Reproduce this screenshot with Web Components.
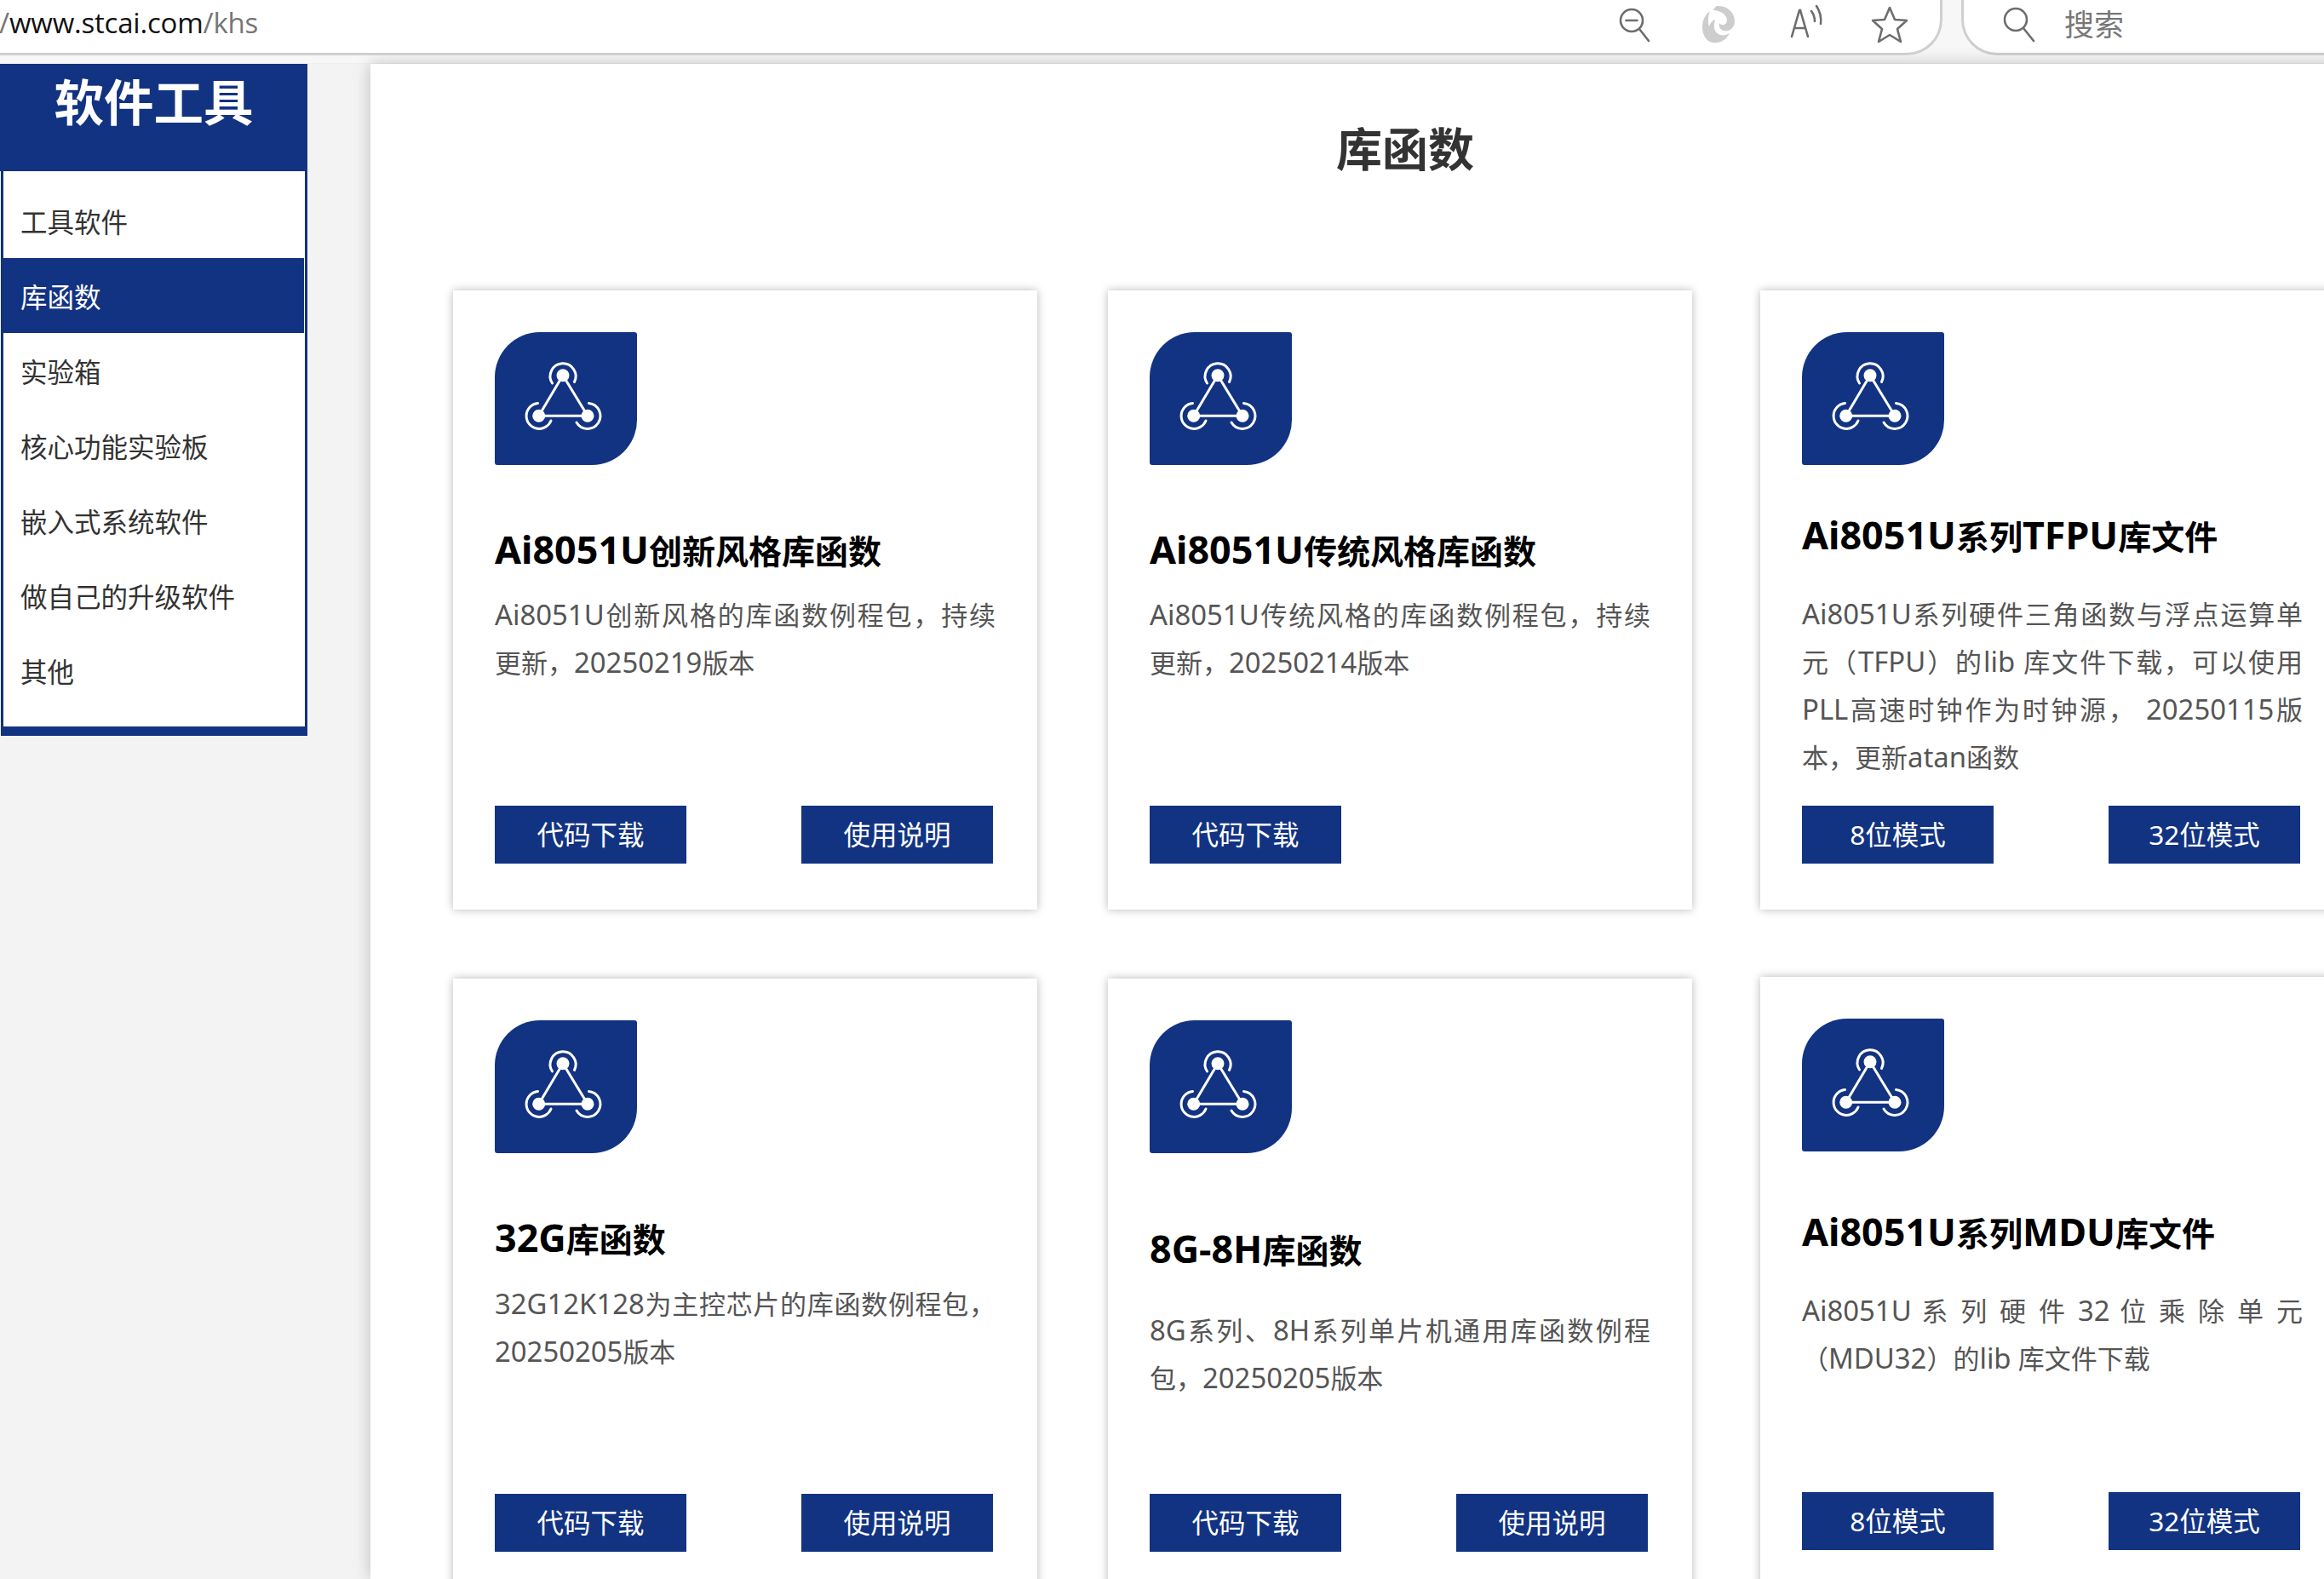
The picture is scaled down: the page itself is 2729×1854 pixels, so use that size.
<!DOCTYPE html>
<html lang="zh-CN">
<head>
<meta charset="utf-8">
<title>库函数</title>
<style>
html,body{margin:0;padding:0;width:2729px;height:1854px;overflow:hidden;background:#f3f3f4;font-family:"Noto Sans","Noto Sans CJK SC",sans-serif;}
x-shell{width:2729px;height:1854px;}
</style>
</head>
<body>
<x-shell>
  <x-browser-bar slot="bar"></x-browser-bar>
  <x-sidebar slot="side" heading="软件工具">
    <x-nav-item>工具软件</x-nav-item>
    <x-nav-item active>库函数</x-nav-item>
    <x-nav-item>实验箱</x-nav-item>
    <x-nav-item>核心功能实验板</x-nav-item>
    <x-nav-item>嵌入式系统软件</x-nav-item>
    <x-nav-item>做自己的升级软件</x-nav-item>
    <x-nav-item>其他</x-nav-item>
  </x-sidebar>
  <x-main-panel slot="main" heading="库函数">
    <x-card style="--tm:69px;--dm:17px">
      <span slot="title">Ai8051U创新风格库函数</span>
      <span slot="desc">Ai8051U创新风格的库函数例程包，持续更新，20250219版本</span>
      <x-btn slot="actions">代码下载</x-btn><x-btn slot="actions">使用说明</x-btn>
    </x-card>
    <x-card style="--tm:69px;--dm:17px">
      <span slot="title">Ai8051U传统风格库函数</span>
      <span slot="desc">Ai8051U传统风格的库函数例程包，持续更新，20250214版本</span>
      <x-btn slot="actions">代码下载</x-btn>
    </x-card>
    <x-card style="--tm:52px;--dm:33px;margin-left:-3px">
      <span slot="title">Ai8051U系列TFPU库文件</span>
      <span slot="desc">Ai8051U系列硬件三角函数与浮点运算单元（TFPU）的lib 库文件下载，可以使用PLL高速时钟作为时钟源， 20250115版本，更新atan函数</span>
      <x-btn slot="actions">8位模式</x-btn><x-btn slot="actions">32位模式</x-btn>
    </x-card>
    <x-card style="--tm:69px;--dm:18px">
      <span slot="title">32G库函数</span>
      <span slot="desc">32G12K128为主控芯片的库函数例程包，20250205版本</span>
      <x-btn slot="actions">代码下载</x-btn><x-btn slot="actions">使用说明</x-btn>
    </x-card>
    <x-card style="--tm:82px;--dm:36px">
      <span slot="title">8G-8H库函数</span>
      <span slot="desc">8G系列、8H系列单片机通用库函数例程包，20250205版本</span>
      <x-btn slot="actions">代码下载</x-btn><x-btn slot="actions">使用说明</x-btn>
    </x-card>
    <x-card style="--tm:64px;--dm:33px;margin-left:-3px;margin-top:-2px">
      <span slot="title">Ai8051U系列MDU库文件</span>
      <span slot="desc">Ai8051U 系 列 硬 件 32 位 乘 除 单 元（MDU32）的lib 库文件下载</span>
      <x-btn slot="actions">8位模式</x-btn><x-btn slot="actions">32位模式</x-btn>
    </x-card>
  </x-main-panel>
</x-shell>
<script>
const BLUE = '#123382';
function def(name, html, init){
  customElements.define(name, class extends HTMLElement{
    constructor(){ super(); const r=this.attachShadow({mode:'open'}); r.innerHTML=html; }
    connectedCallback(){ if(init) init(this); }
  });
}
/* Latin runs are set larger than the CJK around them, as in the reference */
def('x-lat', `<style>:host{display:inline;font-size:var(--lat,1.06em)}</style><slot></slot>`);
document.querySelectorAll('[slot=title],[slot=desc]').forEach(s=>{
  const t=s.textContent; s.textContent='';
  t.split(/([A-Za-z0-9\-]+)/).forEach((p,i)=>{
    if(!p) return;
    if(i%2){ const e=document.createElement('x-lat'); e.textContent=p; s.appendChild(e); }
    else s.appendChild(document.createTextNode(p));
  });
});
def('x-shell', `<style>
:host{display:block;position:relative;overflow:hidden}
.row{display:flex;align-items:stretch;height:1779px}
</style>
<slot name="bar"></slot>
<div class="row"><slot name="side"></slot><slot name="main"></slot></div>`);

def('x-browser-bar', `<style>
:host{display:block;height:75px;box-sizing:border-box;background:#f7f7f7;border-bottom:1px solid #efefef;font-family:"Open Sans","Noto Sans CJK SC",sans-serif}
.wrap{display:flex;height:65px}
.addr{width:2281px;height:65px;box-sizing:border-box;background:#fff;border-right:3px solid #cfcfcf;border-bottom:3px solid #cfcfcf;border-radius:0 0 42px 0;display:flex;align-items:center;position:relative;padding-bottom:9px}
.url{font-size:33px;color:#767676;white-space:nowrap;margin-left:-1px;letter-spacing:-.2px}
.url b{font-weight:400;color:#111}
.tools{margin-left:auto;display:flex;align-items:center;margin-right:29px;gap:0}
.tools svg{display:block;height:54px;width:60px;flex:none}
.t1{margin-right:38px}.t2{margin-right:42px}.t3{margin-right:40px}
.search{flex:1;margin-left:22px;height:65px;box-sizing:border-box;background:#fff;border-left:3px solid #cfcfcf;border-bottom:3px solid #cfcfcf;border-radius:0 0 0 42px;display:flex;align-items:center;padding-left:42px;padding-bottom:9px;color:#777;font-size:35px;font-family:"Noto Sans CJK SC",sans-serif}
.search svg{width:46px;height:46px;flex:none;margin-right:30px}
</style>
<div class="wrap">
  <div class="addr">
    <span class="url">/<b>www.stcai.com</b>/khs</span>
    <div class="tools">
      <svg class="t1" viewBox="0 0 60 54"><g fill="none" stroke="#6d6d6d" stroke-width="2.6" stroke-linecap="round"><circle cx="27" cy="24" r="13"/><path d="M20.5 24h13M36 34l11 14"/></g></svg>
      <svg class="t2" viewBox="0 0 60 54"><g fill="#cdcdcd"><path d="M30 7c13 0 20 9 20 18 0 8-7 13-13 11-4-1-6-5-5-9 2 3 6 3 8 0 3-5-1-14-15-15 1-3 3-5 5-5z"/><path d="M21 13c-6 4-9 11-9 19 0 9 5 17 12 18 9 1 16-3 20-11-7 4-14 3-17-3-2-5-1-9 0-13-3 1-6 4-7 8-2-6-1-13 1-18z"/></g></svg>
      <svg class="t3" viewBox="0 0 60 54"><g fill="none" stroke="#6d6d6d" stroke-width="2.6" stroke-linecap="round"><path d="M15 43l9-31h1l9 31M18 33h13"/><path d="M38 13c3 4 4 8 4 12M44 7c4 6 6 13 5 21"/></g></svg>
      <svg viewBox="0 0 60 54"><path fill="none" stroke="#6d6d6d" stroke-width="2.6" stroke-linejoin="round" d="M30 9l6 14 14 1-11 10 4 15-13-8-13 8 4-15-11-10 14-1z"/></svg>
    </div>
  </div>
  <div class="search">
    <svg viewBox="0 0 46 46"><g fill="none" stroke="#6d6d6d" stroke-width="2.6" stroke-linecap="round"><circle cx="19" cy="19" r="13"/><path d="M28 29l12 15"/></g></svg>
    <span>搜索</span>
  </div>
</div>`);

def('x-sidebar', `<style>
:host{display:block;flex:none;width:361px;margin-right:74px;align-self:flex-start}
.head{background:${BLUE};color:#fff;height:126px;box-sizing:border-box;text-align:center;font:700 58.5px/84px "Noto Sans CJK SC",sans-serif}
.list{margin-left:1px;background:#fff;border:solid ${BLUE};border-width:0 3px 11px 3px;box-sizing:border-box;height:663px;padding-top:14px}
</style>
<div class="head" id="h"></div>
<div class="list"><slot></slot></div>`, el=>{ el.shadowRoot.getElementById('h').textContent = el.getAttribute('heading'); });

def('x-nav-item', `<style>
:host{display:block;height:88px;padding-left:20px;font:400 31.5px/88px "Noto Sans CJK SC",sans-serif;color:#333;margin-right:1px}
:host([active]){background:${BLUE};color:#fff}
</style><slot></slot>`);

def('x-main-panel', `<style>
:host{display:block;flex:none;width:2430px;background:#fff;box-shadow:0 0 18px rgba(0,0,0,.22);padding:0 0 0 97px;box-sizing:border-box}
h1{margin:0;padding-top:58px;height:266px;box-sizing:border-box;margin-left:-97px;text-align:center;font:700 54px/80px "Noto Sans CJK SC",sans-serif;color:#333}
.grid{display:grid;grid-template-columns:repeat(3,686px);column-gap:83px;row-gap:81px;align-items:start}
</style>
<h1 id="h"></h1>
<div class="grid"><slot></slot></div>`, el=>{ el.shadowRoot.getElementById('h').textContent = el.getAttribute('heading'); });

def('x-app-icon', `<style>
:host{display:block;width:167px;height:156px}
svg{display:block;width:100%;height:100%}
</style>
<svg viewBox="0 0 167 156">
<path fill="${BLUE}" d="M53 0H164a3 3 0 0 1 3 3V103a53 53 0 0 1-53 53H3a3 3 0 0 1-3-3V53A53 53 0 0 1 53 0z"/>
<g fill="none" stroke="#fff" stroke-width="3" stroke-linecap="round">
<path d="M80 50.7L51.7 98.3H109z"/>
<path d="M67.5 60A15 15 0 1 1 93.5 58.5"/>
<path d="M50.5 83.5A15 15 0 1 0 66 104"/>
<path d="M110.5 83.5A15 15 0 1 1 96 106"/>
</g>
<g fill="#fff"><circle cx="80" cy="50.7" r="7.5"/><circle cx="51.7" cy="98.3" r="7.5"/><circle cx="109" cy="98.3" r="7.5"/></g>
</svg>`);

def('x-btn', `<style>
:host{display:block;width:225px;height:68px;background:${BLUE};color:#fff;text-align:center;font:400 31.5px/68px "Noto Sans","Noto Sans CJK SC",sans-serif}
</style><slot></slot>`);

def('x-card', `<style>
:host{display:flex;flex-direction:column;box-sizing:border-box;height:727px;width:686px;padding:49px 49px 54px;background:#fff;box-shadow:0 0 10px rgba(0,0,0,.28)}
.t{margin-top:var(--tm);font:700 39px/60px "Noto Sans","Noto Sans CJK SC",sans-serif;color:#000;white-space:nowrap;--lat:1.15em}
.d{margin-top:var(--dm);width:588px;font:400 31px/55px "Noto Sans","Noto Sans CJK SC",sans-serif;color:#555;text-align:justify;--lat:1.06em}
.a{margin-top:auto;width:585px;display:flex;justify-content:space-between}
</style>
<x-app-icon></x-app-icon>
<div class="t"><slot name="title"></slot></div>
<div class="d"><slot name="desc"></slot></div>
<div class="a"><slot name="actions"></slot></div>`);
</script>
</body>
</html>
